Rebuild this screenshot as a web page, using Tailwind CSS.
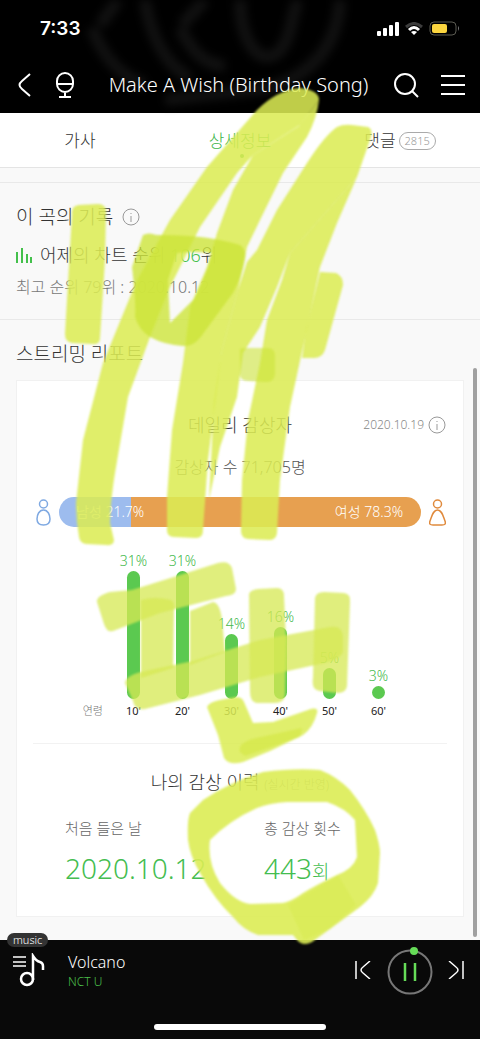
<!DOCTYPE html>
<html lang="ko">
  <head>
    <meta charset="UTF-8" />
    <meta name="viewport" content="width=device-width, initial-scale=1.0" />
    <title>Make A Wish (Birthday Song)</title>
    <script src="https://cdn.jsdelivr.net/npm/@tailwindcss/browser@4"></script>
  </head>
  <body class="bg-[#f9f9f9] font-['Noto_Sans','Noto_Sans_CJK_KR',sans-serif] font-light text-[#333]">
    <div class="relative flex min-h-screen flex-col overflow-hidden">
      <header class="relative bg-black text-white">
        <svg class="absolute inset-0 h-full w-full blur-[4px]" viewBox="0 0 480 113" preserveAspectRatio="none" fill="none" stroke="#111" stroke-width="12">
          <path d="M92 28C102 55 118 75 145 85M100 25L118 0M145 0C150 35 165 65 190 78M180 28C192 52 205 65 225 66M182 25L205 0M240 0C240 35 255 65 275 55C292 42 290 20 298 0M340 0C338 40 318 72 270 88L165 100" />
        </svg>
        <div class="relative flex h-[57px] items-center justify-between pr-5 pl-10">
          <span class="pt-[2px] font-['Inter'] text-[19px] font-semibold">7:33</span>
          <div class="flex items-center gap-[6px]">
            <svg width="22" height="14" fill="#fff">
              <rect x="0" y="9" width="4" height="5" rx="1" />
              <rect x="6" y="6" width="4" height="8" rx="1" />
              <rect x="12" y="3" width="4" height="11" rx="1" />
              <rect x="18" y="0" width="4" height="14" rx="1" />
            </svg>
            <svg width="18" height="14" fill="none" stroke-width="3">
              <path d="M1 5Q9-2 17 5" stroke="#3c3c3c" />
              <path d="M4 8Q9 3 14 8" stroke="#fff" />
              <path d="M9 13L6 10Q9 8 12 10Z" fill="#fff" stroke="none" />
            </svg>
            <svg width="31" height="15">
              <rect x="1" y="1" width="26" height="13" rx="4" fill="none" stroke="#5b5b52" />
              <rect x="3" y="3" width="15" height="9" rx="2" fill="#fbd53f" />
              <path d="M29 5Q31 7 29 10Z" fill="#777" />
            </svg>
          </div>
        </div>
        <div class="relative flex h-14 items-center pr-[15px] pl-[18px]">
          <button aria-label="뒤로">
            <svg width="14" height="24" fill="none" stroke="#fff" stroke-width="2"><path d="M12 1L4 8Q-1 12 4 16L12 23" /></svg>
          </button>
          <button class="ml-6" aria-label="마이크">
            <svg width="18" height="26" fill="none" stroke="#fff" stroke-width="2">
              <path d="M1 9A8 8 0 0 1 17 9V12A8 8 0 0 1 1 12ZM1 12H17M9 20V25M3 25H15" />
            </svg>
          </button>
          <h1 class="flex-1 pl-[10px] text-center text-[20px] whitespace-nowrap">Make A Wish (Birthday Song)</h1>
          <button aria-label="검색">
            <svg width="26" height="26" fill="none" stroke="#fff" stroke-width="2"><circle cx="12" cy="12" r="10" /><path d="M19 19L25 25" /></svg>
          </button>
          <button class="ml-[22px]" aria-label="메뉴">
            <svg width="24" height="20" stroke="#fff" stroke-width="2"><path d="M0 1H24M0 10H24M0 19H24" /></svg>
          </button>
        </div>
      </header>

      <nav class="grid h-[55px] grid-cols-3 items-center border-b border-[#e4e4e4] bg-white pt-[2px] text-[17px]">
        <a href="#lyrics" class="text-center">가사</a>
        <a href="#info" class="relative text-center text-[#3db54a]">
          상세정보
          <span class="absolute -bottom-1 left-1/2 size-1 rounded-full bg-[#3db54a]"></span>
        </a>
        <a href="#comments" class="flex items-center justify-center gap-[3px]">
          댓글
          <span class="rounded-full border border-[#aaa] px-[5px] text-[11px] leading-4 text-[#999]">2815</span>
        </a>
      </nav>

      <main class="flex-1">
        <section class="mt-[14px] border-y border-[#e9e9e9] px-4 pt-5 pb-5">
          <h2 class="flex h-7 items-center gap-[9px] text-[19px]">
            이 곡의 기록
            <svg width="19" height="19" fill="none" stroke="#999"><circle cx="9" cy="9" r="8" /><path d="M9 8V14M9 5V6" /></svg>
          </h2>
          <p class="mt-[10px] flex h-7 items-center text-[18px] whitespace-pre">
            <svg class="mr-2" width="16" height="16" stroke="#44c04c" stroke-width="2"><path d="M1 5V16M6 1V16M11 7V16M15 10V16" /></svg>어제의 차트 순위 <span class="text-[#44c04c]">106</span>위</p>
          <p class="mt-[6px] h-6 text-[16px] leading-6 text-[#777]">최고 순위 79위 : 2020.10.12</p>
        </section>

        <section class="px-4 pt-5 pb-[23px]">
          <h2 class="h-7 text-[19px] leading-7">스트리밍 리포트</h2>
          <div class="mt-3 border border-[#f1f1f1] bg-white px-4 pb-6">
            <div class="relative mt-8 flex h-6 items-center justify-center">
              <h3 class="text-[18px]">데일리 감상자</h3>
              <div class="absolute right-0 flex items-center gap-1 text-[12px] text-[#888]">
                2020.10.19
                <svg width="19" height="19" fill="none" stroke="#999"><circle cx="9" cy="9" r="8" /><path d="M9 8V14M9 5V6" /></svg>
              </div>
            </div>
            <p class="mt-[18px] h-6 text-center text-[16px] leading-6 text-[#555]">감상자 수 71,705명</p>

            <div class="mt-[18px] flex items-center gap-2 pr-[1px] pl-[3px]">
              <svg width="15" height="27" fill="none" stroke="#7fa9e2" stroke-width="1.5">
                <circle cx="7.5" cy="5" r="4" />
                <path d="M7.500 11C3 11 1 16 1 20C1 24 3 26 7.500 26C12 26 14 24 14 20C14 16 12 11 7.500 11Z" />
              </svg>
              <div class="flex h-[30px] flex-1 overflow-hidden rounded-full text-[14px] leading-[30px] whitespace-nowrap text-white">
                <div class="relative z-10 w-1/5 bg-[#9dbcee] pl-[17px]">남성 21.7%</div>
                <div class="flex-1 bg-[#e7a050] pr-[18px] text-right">여성 78.3%</div>
              </div>
              <svg width="17" height="27" fill="none" stroke="#e08a3c" stroke-width="1.5">
                <circle cx="8.5" cy="5" r="4" />
                <path d="M8.500 11C4 11 3 17 1 22C0 25 1 26 4 26H13C16 26 17 25 16 22C14 17 13 11 8.500 11Z" />
              </svg>
            </div>

            <div class="mt-6 flex items-end text-[14px] text-[#44b94c]">
              <span class="w-[76px] pr-[6px] text-right text-[11px] leading-6 text-[#777]">연령</span>
              <div class="mr-11 grid flex-1 grid-cols-6 items-end text-center leading-5">
                <div>31%<div class="mx-auto h-32 w-[13px] rounded-full bg-[#5bc950]"></div><span class="block text-[11px] leading-6 font-normal text-[#222]">10'</span></div>
                <div>31%<div class="mx-auto h-32 w-[13px] rounded-full bg-[#5bc950]"></div><span class="block text-[11px] leading-6 font-normal text-[#222]">20'</span></div>
                <div>14%<div class="mx-auto h-[65px] w-[13px] rounded-full bg-[#5bc950]"></div><span class="block text-[11px] leading-6 font-normal text-[#222]">30'</span></div>
                <div>16%<div class="mx-auto h-[72px] w-[13px] rounded-full bg-[#5bc950]"></div><span class="block text-[11px] leading-6 font-normal text-[#222]">40'</span></div>
                <div>5%<div class="mx-auto h-[31px] w-[13px] rounded-full bg-[#5bc950]"></div><span class="block text-[11px] leading-6 font-normal text-[#222]">50'</span></div>
                <div>3%<div class="mx-auto h-[13px] w-[13px] rounded-full bg-[#5bc950]"></div><span class="block text-[11px] leading-6 font-normal text-[#222]">60'</span></div>
              </div>
            </div>

            <div class="mt-5 border-t border-[#f2f2f2] pt-6">
              <h3 class="h-7 text-center text-[18px] leading-7">나의 감상 이력 <span class="text-[12px] text-[#888]">(실시간 반영)</span></h3>
              <div class="mt-5 grid grid-cols-2 gap-x-4 pl-8">
                <div>
                  <p class="text-[15px] leading-6 text-[#666]">처음 들은 날</p>
                  <p class="mt-2 text-[28px] leading-10 text-[#44bd50]">2020.10.12</p>
                </div>
                <div>
                  <p class="text-[15px] leading-6 text-[#666]">총 감상 횟수</p>
                  <p class="mt-2 text-[28px] leading-10 text-[#44bd50]">443<span class="text-[19px]">회</span></p>
                </div>
              </div>
            </div>
          </div>
        </section>
      </main>

      <footer class="relative h-[99px] bg-[#090909] text-white">
        <span class="absolute -top-[7px] left-[7px] rounded-full bg-[#333] px-[6px] text-[11px] leading-[14px]">music</span>
        <div class="flex h-[60px] items-center pr-4 pl-3">
          <button aria-label="재생목록">
            <svg width="34" height="34" fill="none" stroke="#fff">
              <path d="M1 4H14M1 9H14M1 13H14" stroke-width="1.5" />
              <circle cx="15" cy="26" r="6" stroke-width="2.5" />
              <path d="M21 27V3Q24 8 28 9Q31 10 31 13V17" stroke-width="2.5" />
            </svg>
          </button>
          <div class="ml-[22px] flex-1">
            <p class="text-[16px] leading-6">Volcano</p>
            <p class="text-[12px] leading-4 text-[#4cc04c]">NCT U</p>
          </div>
          <button aria-label="이전 곡">
            <svg width="16" height="18" fill="none" stroke="#fff" stroke-width="1.5"><path d="M1 0V18M15 0L8 6Q4 9 8 12L15 18" /></svg>
          </button>
          <button class="ml-4" aria-label="일시정지">
            <svg width="46" height="50" fill="none">
              <circle cx="23" cy="27" r="21.5" stroke="#777" stroke-width="2" />
              <circle cx="27" cy="6" r="4" fill="#66dc58" />
              <path d="M18 18V36M28 18V36" stroke="#66dc58" stroke-width="2.5" />
            </svg>
          </button>
          <button class="ml-[15px]" aria-label="다음 곡">
            <svg width="16" height="18" fill="none" stroke="#fff" stroke-width="1.5"><path d="M15 0V18M1 0L8 6Q12 9 8 12L1 18" /></svg>
          </button>
        </div>
        <div class="mx-auto mt-6 h-[6px] w-[172px] rounded-full bg-white"></div>
      </footer>

      <div class="absolute top-[368px] right-[3px] bottom-[102px] w-1 rounded-full bg-[#a0a0a0]"></div>

      <!-- highlighter strokes -->
      <svg class="pointer-events-none absolute inset-0 z-20 h-full w-full blur-[1px]" viewBox="0 0 480 1039" preserveAspectRatio="none" fill="#dbec54">
        <g fill-opacity=".87">
          <path d="M257 110Q277 90 300 88Q319 90 319 100L300 125L253 155L237 173L200 227L170 287L150 337L128 397L115 473Q110 505 110 523L114 540Q114 546 106 545L86 544Q80 543 79 537Q76 520 76 503L83 440L103 363L137 280L170 220L207 167Z" />
          <path d="M319 100Q317 118 307 137L283 173L260 220L247 247L238 290L222 350L208 460L203 530Q203 538 196 538L174 537Q167 537 167 530L167 497L172 430L183 363L190 307L207 267L217 233L233 190L253 155L299 126Z" />
          <path d="M337 127Q343 124 352 125L368 127Q373 129 371 137L357 177L290 253L277 287L260 327L243 353L237 397L220 447L209 500L214 400L222 350L238 290L247 262L257 250L277 210L307 163Q325 135 337 127Z" />
          <path d="M290 253L357 177L337 223L320 267L303 347L290 407L280 480L277 533Q276 540 270 540L248 539Q241 538 241 531L242 480L248 420L260 363L267 320L282 280Z" />
          <path d="M72 214Q71 206 79 205L98 204Q106 204 106 212L105 260L100 338Q100 345 92 344L72 343Q65 342 65 334Z" />
          <path d="M320 272L336 273Q343 276 343 285L325 350Q322 358 314 358L302 358L306 330Z" />
        </g>
        <!-- darker where strokes cross -->
        <g fill="#cde53a">
          <path fill-opacity=".8" fill-rule="evenodd" d="M143 235Q149 232 156 235Q205 234 240 245Q247 250 245 259Q242 277 233 293L200 338Q192 347 183 346Q165 345 150 337Q139 330 135 317Q136 300 132 267ZM177 253Q195 251 212 253L206 272L194 299L170 323L168 280Z" />
          <path fill-opacity=".6" d="M240 349Q240 348 247 348L268 348Q275 348 275 356L275 374Q274 382 267 382L248 381Q240 381 240 374Z" />
        </g>
        <g fill="#d6e954" fill-opacity=".76">
          <path d="M97 602Q96 596 110 592L132 590L180 575L218 563Q229 560 232 568L236 589Q236 595 226 596L160 613L113 631Q107 633 104 624Z" />
          <path d="M125 683Q126 675 145 671L193 661L260 640L330 627Q342 625 343 636L343 652Q340 660 320 664L260 677L200 695L145 709Q135 711 133 701Z" />
          <path d="M141 600Q155 596 171 600Q175 602 174 612L173 668L141 678Z" />
          <path d="M190 611L213 602Q220 603 222 620L225 652L190 665Z" />
          <path d="M249 594Q250 590 258 589L277 588Q284 588 284 596L286 640L285 695Q284 703 275 703L257 703Q250 702 250 692Z" />
          <path d="M315 598Q316 592 324 592L344 593Q351 594 350 602L347 686Q346 693 338 693L320 691Q311 690 313 678Z" />
        </g>
        <path fill-opacity=".86" d="M207 707Q209 702 220 700L236 697Q242 697 244 702L253 723L273 722L308 710Q319 706 317 713Q313 728 303 735L270 751L243 762Q229 766 224 758L218 735Z" />
        <path fill="#cbe22a" fill-opacity=".4" d="M240 752Q237 744 252 739L302 728L300 737L245 756Z" />
        <path fill-opacity=".9" fill-rule="evenodd" d="M188 840Q187 820 190 813L203 800Q230 782 263 772Q295 768 320 770Q336 776 350 790Q366 810 375 830Q380 845 380 853L378 883Q374 896 360 907L334 926L312 942Q303 947 297 940L293 935L258 935Q243 930 233 917Q215 900 200 873Q190 856 188 840ZM210 840Q230 820 257 808Q270 803 287 802L327 802Q345 808 355 820L357 857Q353 869 337 875Q318 884 303 893Q292 901 283 903L250 904Q235 902 220 883Q207 862 210 840Z" />
        <path fill="#cfe636" fill-opacity=".25" d="M288 905L338 875L356 905L330 929L304 940Z" />
      </svg>
    </div>
  </body>
</html>
